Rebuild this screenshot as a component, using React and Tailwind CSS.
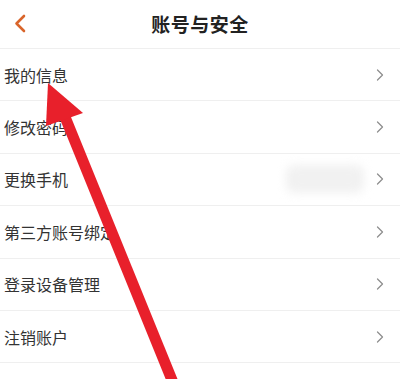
import React from 'react';
import { ChevronRight } from 'lucide-react';

const items = ['我的信息', '修改密码', '更换手机', '第三方账号绑定', '登录设备管理', '注销账户'];

const Row = ({ label, blurred }) => (
  <div className="flex items-center justify-between h-[52.4px] border-b border-[#efefef] pl-[4px] pr-[10px]">
    <span className="text-[16px] text-[#333333]">{label}</span>
    <div className="flex items-center">
      {blurred && <div className="w-[78px] h-[28px] mr-[6px] rounded-lg bg-[#f1f1f1] blur-[5px]" />}
      <ChevronRight size={20} strokeWidth={1.5} color="#8e8e8e" />
    </div>
  </div>
);

const App = () => {
  return (
    <div
      className="relative w-[400px] h-[379px] overflow-hidden bg-white"
      style={{ fontFamily: '"Noto Sans CJK SC", "Noto Sans", sans-serif' }}
    >
      <div className="relative flex items-center justify-center h-[49px] border-b border-[#efefef]">
        <svg className="absolute left-[12px] top-[13px]" width="16" height="22" viewBox="0 0 16 22">
          <polyline points="12,3 4.5,10.5 12,18" fill="none" stroke="#d9652b" strokeWidth="2.6" strokeLinecap="round" strokeLinejoin="round" />
        </svg>
        <h1 className="text-[19px] font-bold text-[#222222] tracking-[0.5px]">账号与安全</h1>
      </div>
      {items.map((label) => (
        <Row key={label} label={label} blurred={label === '更换手机'} />
      ))}

      {/* red annotation arrow */}
      <svg className="absolute inset-0 pointer-events-none" width="400" height="379" viewBox="0 0 400 379">
        <line x1="63" y1="112" x2="174" y2="385" stroke="#e8202b" strokeWidth="11" />
        <polygon points="48,83 46,126 83,113" fill="#e8202b" />
      </svg>
    </div>
  );
};

export default App;
